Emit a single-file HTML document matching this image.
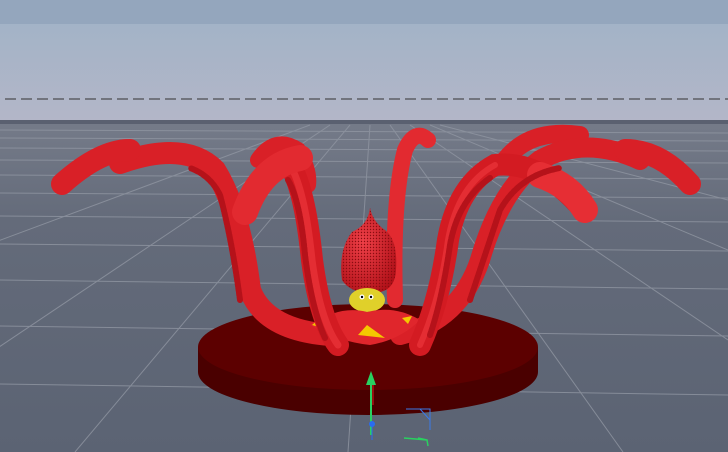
<!DOCTYPE html>
<html><head><style>html,body{margin:0;padding:0;width:728px;height:452px;overflow:hidden;background:#5d6575}</style></head>
<body>
<svg width="728" height="452" viewBox="0 0 728 452" xmlns="http://www.w3.org/2000/svg">
<defs>
<linearGradient id="sky" x1="0" y1="0" x2="0" y2="1">
<stop offset="0" stop-color="#a3b3c7"/><stop offset="1" stop-color="#bbb8c8"/>
</linearGradient>
<linearGradient id="floor" x1="0" y1="0" x2="0" y2="1">
<stop offset="0" stop-color="#757b89"/><stop offset="0.3" stop-color="#646b7a"/><stop offset="1" stop-color="#5b6373"/>
</linearGradient>
<radialGradient id="head" cx="0.4" cy="0.4" r="0.7">
<stop offset="0" stop-color="#f04048"/><stop offset="1" stop-color="#b01018"/>
</radialGradient>
<pattern id="dots" width="3" height="3" patternUnits="userSpaceOnUse"><circle cx="1.5" cy="1.5" r="0.7" fill="#8a0c10"/></pattern>
</defs>
<rect x="0" y="0" width="728" height="24" fill="#94a6bd"/>
<rect x="0" y="24" width="728" height="144" fill="url(#sky)"/>
<line x1="5" y1="99" x2="728" y2="99" stroke="#333" stroke-width="1" stroke-dasharray="11,5"/>
<rect x="0" y="120" width="728" height="332" fill="url(#floor)"/>
<rect x="0" y="120" width="728" height="4" fill="#5a6070"/>
<g stroke="#9096a2" stroke-width="1" fill="none" opacity="0.8">
<line x1="0" y1="130" x2="728" y2="133"/>
<line x1="0" y1="138" x2="728" y2="141"/>
<line x1="0" y1="148" x2="728" y2="151"/>
<line x1="0" y1="160" x2="728" y2="163"/>
<line x1="0" y1="175" x2="728" y2="179"/>
<line x1="0" y1="193" x2="728" y2="198"/>
<line x1="0" y1="216" x2="728" y2="222"/>
<line x1="0" y1="244" x2="728" y2="251"/>
<line x1="0" y1="280" x2="728" y2="289"/>
<line x1="0" y1="326" x2="728" y2="336"/>
<line x1="0" y1="384" x2="728" y2="395"/>
<line x1="350" y1="125" x2="75" y2="452"/>
<line x1="370" y1="125" x2="348" y2="452"/>
<line x1="390" y1="125" x2="623" y2="452"/>
<line x1="330" y1="125" x2="-80" y2="400"/>
<line x1="410" y1="125" x2="728" y2="340"/>
<line x1="310" y1="125" x2="-80" y2="270"/>
<line x1="430" y1="125" x2="728" y2="250"/>
<line x1="440" y1="125" x2="728" y2="200"/>
</g>
<path d="M198 347 L198 372 A170 43 0 0 0 538 372 L538 347 Z" fill="#4a0000"/>
<ellipse cx="368" cy="347" rx="170" ry="43" fill="#5c0000"/>
<g fill="none" stroke-linecap="round" stroke="#d92027">
<path d="M258 160 Q275 135 298 150 Q310 170 308 185" stroke-width="16"/>
<path d="M505 160 Q530 128 580 135" stroke-width="18"/>
<path d="M395 300 Q392 200 405 150 Q415 128 428 140" stroke-width="16" stroke="#e22a30"/>
<path d="M120 163 Q185 140 215 170 Q240 210 250 290 Q265 330 330 335" stroke-width="22"/>
<path d="M640 160 Q585 135 540 160 Q500 190 480 260 Q460 320 400 335" stroke-width="20"/>
<path d="M62 184 Q100 150 130 150" stroke-width="22"/>
<path d="M690 184 Q660 150 625 150" stroke-width="22"/>
</g>
<path d="M370 208 Q368 225 352 232 Q338 250 342 280 Q350 293 372 293 Q395 293 396 270 Q398 240 385 230 Q373 222 370 208Z" fill="url(#head)"/>
<path d="M370 208 Q368 225 352 232 Q338 250 342 280 Q350 293 372 293 Q395 293 396 270 Q398 240 385 230 Q373 222 370 208Z" fill="url(#dots)"/>
<ellipse cx="367" cy="300" rx="18" ry="12" fill="#e0d02a"/>
<circle cx="362" cy="297" r="2.5" fill="#fff"/><circle cx="362" cy="297" r="1.2" fill="#000"/>
<circle cx="371" cy="297" r="2.5" fill="#fff"/><circle cx="371" cy="297" r="1.2" fill="#000"/>
<path d="M310 325 Q340 305 367 312 Q395 305 420 320 Q400 340 370 345 Q340 342 310 325Z" fill="#e0262c"/>
<path d="M358 335 L367 325 L385 338 Z" fill="#f4c800"/>
<path d="M312 325 L318 320 L322 328Z M402 318 L412 316 L408 324Z" fill="#f4c800"/>
<g fill="none" stroke-linecap="round">
<path d="M338 345 Q320 320 312 260 Q305 190 290 165" stroke="#d31b22" stroke-width="22"/>
<path d="M338 345 Q320 320 312 260 Q305 190 290 165" stroke="#f03a40" stroke-width="7" opacity="0.6"/>
<path d="M300 158 Q262 165 245 212" stroke="#e22a30" stroke-width="26"/>
<path d="M420 345 Q440 300 448 240 Q458 185 495 165 Q540 160 582 208" stroke="#d31b22" stroke-width="22"/>
<path d="M420 345 Q440 300 448 240 Q458 185 495 165" stroke="#f03a40" stroke-width="6" opacity="0.6"/>
<path d="M540 175 Q570 185 585 210" stroke="#e62e34" stroke-width="26"/>
</g>
<g fill="none" stroke="#b5121a" stroke-width="6" stroke-dasharray="3,1.5" stroke-linecap="round">
<path d="M325 338 Q312 310 305 255 Q300 200 288 180"/>
<path d="M430 335 Q442 300 450 245 Q458 200 490 178"/>
<path d="M240 300 Q232 240 220 195 Q210 175 190 168"/>
<path d="M470 300 Q490 240 500 210 Q520 175 560 168"/>
</g>
<line x1="371" y1="380" x2="371" y2="435" stroke="#2ad060" stroke-width="2"/>
<path d="M366 385 L371 371 L376 385Z" fill="#2ad060"/>
<line x1="373" y1="385" x2="373" y2="405" stroke="#e02020" stroke-width="1"/>
<circle cx="372" cy="424" r="3" fill="#2a6cf0"/>
<line x1="372" y1="424" x2="372" y2="440" stroke="#2a6cf0" stroke-width="1"/>
<path d="M406 409 L430 409 L430 430 M420 409 L430 420" stroke="#3a7ae8" stroke-width="1" fill="none"/>
<path d="M404 438 L427 440 L428 446 M418 438 L427 440" stroke="#2ad060" stroke-width="1.5" fill="none"/>
</svg>
</body></html>
